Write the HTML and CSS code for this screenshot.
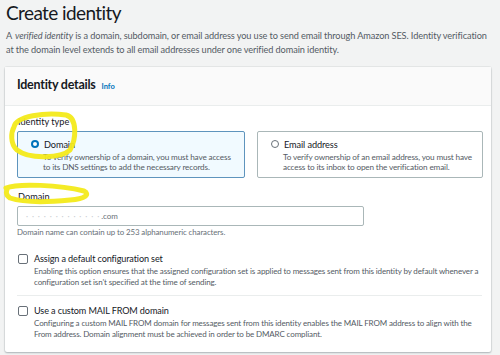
FILE: index.html
```html
<!DOCTYPE html>
<html lang="en">
<head>
<meta charset="utf-8">
<title>Create identity</title>
<link rel="stylesheet" href="styles.css">
</head>
<body>
<div class="page">
  <h1 class="title">Create identity</h1>
  <p class="intro">A <em>verified identity</em> is a domain, subdomain, or email address you use to send email through Amazon SES. Identity verification at the domain level extends to all email addresses under one verified domain identity.</p>
  <section class="card">
    <header class="card-head">
      <h2>Identity details</h2><a class="info">Info</a>
    </header>
    <div class="card-body">
      <div class="label">Identity type</div>
      <div class="tiles">
        <div class="tile selected">
          <div class="tile-title"><span class="radio on"></span>Domain</div>
          <div class="tile-desc">To verify ownership of a domain, you must have access to its DNS settings to add the necessary records.</div>
        </div>
        <div class="tile">
          <div class="tile-title"><span class="radio"></span>Email address</div>
          <div class="tile-desc">To verify ownership of an email address, you must have access to its inbox to open the verification email.</div>
        </div>
      </div>
      <div class="label label-domain">Domain</div>
      <div class="input"><span class="blur">· · · · · · · · · · · · ·</span><span class="com">.com</span></div>
      <div class="hint">Domain name can contain up to 253 alphanumeric characters.</div>
      <div class="check-row first">
        <div class="check-title"><span class="box"></span>Assign a default configuration set</div>
        <div class="check-desc">Enabling this option ensures that the assigned configuration set is applied to messages sent from this identity by default whenever a configuration set isn't specified at the time of sending.</div>
      </div>
      <div class="divider"></div>
      <div class="check-row">
        <div class="check-title"><span class="box"></span>Use a custom MAIL FROM domain</div>
        <div class="check-desc">Configuring a custom MAIL FROM domain for messages sent from this identity enables the MAIL FROM address to align with the From address. Domain alignment must be achieved in order to be DMARC compliant.</div>
      </div>
    </div>
  </section>
</div>
<svg class="marker" width="500" height="355" viewBox="0 0 500 355">
  <path d="M14 127 C16 116 45 112 66 115 C78 118 76 140 70 150 C62 158 30 160 17 150 C10 144 11 132 14 127" />
  <path d="M6 188 C18 183 60 185 84 191 C90 194 86 199 70 200 C50 202 25 203 10 198 C5 195 6 190 8 188" />
</svg>
</body>
</html>
```
FILE: styles.css
```css
* { box-sizing: border-box; }
html, body { margin: 0; padding: 0; }
body {
  width: 500px;
  height: 355px;
  overflow: hidden;
  background: #f2f3f3;
  font-family: "Lato", "Liberation Sans", sans-serif;
  color: #16191f;
  position: relative;
}
.page { padding: 0 9px 0 5px; }
.title {
  margin: 0 0 0 1px;
  font-weight: 400;
  font-size: 19px;
  letter-spacing: -0.6px;
  line-height: 26px;
}
.intro {
  margin: 3px 0 0 1px;
  font-size: 9.2px;
  letter-spacing: -0.1px;
  line-height: 14px;
  color: #545b64;
}
.intro em { font-style: italic; padding-left: 1px; }
.card {
  margin-top: 10px;
  background: #fff;
  border-radius: 2px;
  box-shadow: 0 1px 2px rgba(0,22,40,.25), 0 0 0 1px #e6e8e8;
  height: 285px;
}
.card-head {
  display: flex;
  align-items: baseline;
  gap: 6px;
  padding: 9px 12px 0 12px;
  height: 39px;
  background: #fafafa;
  border-bottom: 1px solid #eaeded;
}
.card-head h2 {
  margin: 0;
  font-size: 12.5px;
  letter-spacing: -0.25px;
  font-weight: 700;
  line-height: 18px;
}
.info {
  font-size: 7.5px;
  font-weight: 700;
  color: #0073bb;
}
.card-body { padding: 10px 12px 0 12px; }
.label {
  font-size: 9.2px;
  line-height: 12px;
  color: #16191f;
  margin-left: 1px;
}
.tiles {
  display: grid;
  grid-template-columns: 228px 226px;
  gap: 12px;
  margin-top: 3px;
}
.tile {
  border: 1px solid #aab7b8;
  border-radius: 2px;
  height: 47px;
  padding: 5.5px 8px 0 13px;
  background: #fff;
}
.tile.selected { border-color: #5e94bd; background: #f1faff; }
.tile-title {
  display: flex;
  align-items: center;
  gap: 5px;
  font-size: 9.2px;
  letter-spacing: -0.1px;
  line-height: 13px;
}
.tile-desc {
  margin: 1.5px 0 0 12px;
  font-size: 8.2px;
  letter-spacing: -0.15px;
  line-height: 10px;
  color: #545b64;
}
.radio {
  width: 8px; height: 8px;
  border-radius: 50%;
  border: 1px solid #687078;
  background: #fff;
  flex: none;
}
.radio.on { border: 2.5px solid #0073bb; }
.label-domain { margin-top: 13px; }
.input {
  margin-top: 3px;
  width: 347px;
  height: 20px;
  border: 1px solid #aab7b8;
  border-radius: 2px;
  padding: 0 0 0 8px;
  display: flex;
  align-items: center;
  font-size: 8px;
  color: #bfc4c8;
}
.input .blur { letter-spacing: 0.9px; color: #c8ccd0; }
.input .com { color: #687078; margin-left: 1px; }
.hint {
  margin-top: 1px;
  font-size: 7.9px;
  letter-spacing: -0.1px;
  line-height: 11px;
  color: #687078;
}
.check-row { padding-top: 9px; }
.check-row.first { padding-top: 14.5px; }
.check-title {
  display: flex;
  align-items: center;
  gap: 6px;
  font-size: 9.1px;
  letter-spacing: -0.12px;
  line-height: 12px;
  margin-left: 1px;
}
.box {
  width: 10px; height: 10px;
  border: 1px solid #687078;
  border-radius: 2px;
  flex: none;
}
.check-desc {
  margin: 1.5px 0 0 17px;
  font-size: 8px;
  letter-spacing: -0.12px;
  line-height: 11px;
  color: #545b64;
}
.divider {
  margin-top: 6.5px;
  border-top: 1px solid #eaeded;
  margin-right: -3px;
}
.marker {
  position: absolute;
  left: 0; top: 0;
  pointer-events: none;
}
.marker path {
  fill: none;
  stroke: #f3ea1a;
  stroke-width: 5;
  stroke-linecap: round;
  opacity: .95;
}
```
